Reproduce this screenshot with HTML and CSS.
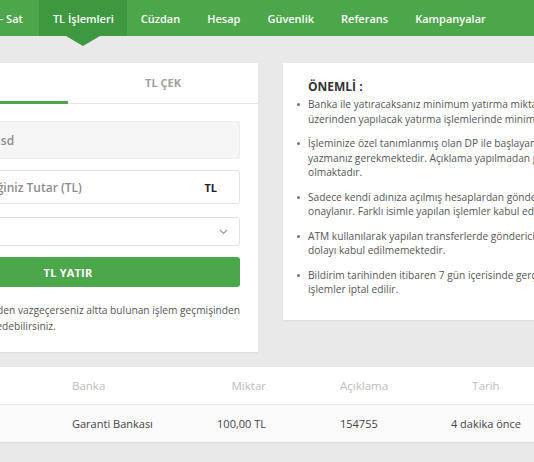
FILE: index.html
```html
<!DOCTYPE html>
<html lang="tr">
<head>
<meta charset="utf-8">
<title>TL İşlemleri</title>
<link rel="stylesheet" href="styles.css">
</head>
<body>
<nav class="nav">
  <a class="nav-item">Al - Sat</a>
  <a class="nav-item active">TL İşlemleri</a>
  <a class="nav-item">Cüzdan</a>
  <a class="nav-item">Hesap</a>
  <a class="nav-item">Güvenlik</a>
  <a class="nav-item">Referans</a>
  <a class="nav-item">Kampanyalar</a>
</nav>

<main class="main">
  <div class="row">
    <section class="card form-card">
      <div class="tabs">
        <div class="tab active">TL YATIR</div>
        <div class="tab">TL ÇEK</div>
      </div>
      <div class="form-body">
        <input class="field disabled" type="text" value="Ahmet Yılmaz asd" disabled>
        <div class="field suffix-field">
          <input class="inner" type="text" placeholder="Yatırmak İstediğiniz Tutar (TL)">
          <span class="suffix">TL</span>
        </div>
        <div class="field select-field">
          <span class="select-text">Banka Seçiniz</span>
          <svg class="chev" width="9" height="6" viewBox="0 0 9 6"><path d="M1 1 L4.5 4.5 L8 1" fill="none" stroke="#9a9a9a" stroke-width="1.1"/></svg>
        </div>
        <button class="btn">TL YATIR</button>
        <p class="note">Para yatırma işleminden vazgeçerseniz altta bulunan işlem geçmişinden<br>işlem talebinizi iptal edebilirsiniz.</p>
      </div>
    </section>

    <section class="card info-card">
      <h3 class="info-title">ÖNEMLİ :</h3>
      <ul class="info-list">
        <li>Banka ile yatıracaksanız minimum yatırma miktarı 10 TL'dir. ATM<br>üzerinden yapılacak yatırma işlemlerinde minimum tutar 50 TL'dir.</li>
        <li>İşleminize özel tanımlanmış olan DP ile başlayan kodu açıklama kısmına<br>yazmanız gerekmektedir. Açıklama yapılmadan gönderilen işlemler iade<br>olmaktadır.</li>
        <li>Sadece kendi adınıza açılmış hesaplardan gönderilen transferler<br>onaylanır. Farklı isimle yapılan işlemler kabul edilmemektedir.</li>
        <li>ATM kullanılarak yapılan transferlerde gönderici bilgisi görünmediğinden<br>dolayı kabul edilmemektedir.</li>
        <li>Bildirim tarihinden itibaren 7 gün içerisinde gerçekleşmeyen<br>işlemler iptal edilir.</li>
      </ul>
    </section>
  </div>

  <section class="card table-card">
    <div class="trow thead">
      <div class="c c1">İşlem</div>
      <div class="c c2">Banka</div>
      <div class="c c3">Miktar</div>
      <div class="c c4">Açıklama</div>
      <div class="c c5">Tarih</div>
      <div class="c c6">Durum</div>
    </div>
    <div class="trow tbody">
      <div class="c c1">Yatırma</div>
      <div class="c c2">Garanti Bankası</div>
      <div class="c c3">100,00 TL</div>
      <div class="c c4">154755</div>
      <div class="c c5">4 dakika önce</div>
      <div class="c c6">Bekliyor</div>
    </div>
  </section>
</main>
</body>
</html>
```

FILE: styles.css
```css
html, body {
  margin: 0;
  padding: 0;
  overflow: hidden;
}
body {
  background: #e9e9e9;
  font-family: "Open Sans", "Noto Sans", sans-serif;
  color: #555;
  width: 534px;
  height: 462px;
}

.nav {
  display: flex;
  height: 36px;
  background: #4ca64a;
  margin-left: -27px;
  width: 1000px;
}
.nav-item {
  position: relative;
  display: flex;
  align-items: center;
  padding: 0 13.5px;
  color: #fff;
  font-size: 11px;
  font-weight: 600;
  white-space: nowrap;
}
.nav-item.active {
  background: #3e983f;
  margin-left: 3px;
}
.nav-item.active::after {
  content: "";
  position: absolute;
  left: 50%;
  top: 36px;
  margin-left: -17px;
  border-left: 17px solid transparent;
  border-right: 17px solid transparent;
  border-top: 10px solid #3e983f;
}

.main {
  margin-left: -122px;
  padding-top: 27px;
}
.row {
  display: flex;
  align-items: flex-start;
  gap: 25px;
}
.card {
  background: #fff;
  box-shadow: 0 1px 2px rgba(0,0,0,0.06);
}

.form-card {
  width: 380px;
  flex: none;
}
.tabs {
  display: flex;
  height: 40px;
  border-bottom: 1px solid #e6e6e6;
}
.tab {
  flex: 1;
  display: flex;
  align-items: center;
  justify-content: center;
  font-size: 11px;
  font-weight: 700;
  color: #a0a0a0;
  border-bottom: 3px solid transparent;
  margin-bottom: -1px;
}
.tab.active {
  border-bottom-color: #4ca64a;
  color: #333;
}
.form-body {
  padding: 17px 18px 18px;
  display: flex;
  flex-direction: column;
}
.field {
  box-sizing: border-box;
  width: 100%;
  border: 1px solid #e2e2e2;
  border-radius: 3px;
  font-family: inherit;
  font-size: 12px;
  font-weight: 600;
  background: #fff;
}
input.field {
  display: block;
  height: 38px;
  padding: 0 12px;
  color: #8c8c8c;
  outline: none;
}
.field.disabled {
  background: #f5f5f5;
  border-color: #ececec;
  padding-left: 14px;
}
.suffix-field {
  display: flex;
  align-items: center;
  height: 34px;
  margin-top: 11px;
}
.inner {
  flex: 1;
  min-width: 0;
  border: 0;
  outline: none;
  background: transparent;
  font-family: inherit;
  font-size: 12px;
  font-weight: 600;
  padding: 0 12px;
  color: #555;
}
.inner::placeholder {
  color: #8c8c8c;
  opacity: 1;
}
.suffix {
  font-size: 11px;
  font-weight: 700;
  color: #222;
  padding-right: 22px;
}
.select-field {
  display: flex;
  align-items: center;
  justify-content: space-between;
  height: 29px;
  margin-top: 13px;
  padding: 0 11px 0 12px;
}
.select-text {
  color: #555;
  font-weight: 400;
  font-size: 12px;
}
.chev {
  display: block;
}
.btn {
  margin-top: 11px;
  height: 30px;
  border: 0;
  border-radius: 3px;
  background: #4ca64a;
  color: #fff;
  font-family: inherit;
  font-size: 11px;
  font-weight: 700;
  letter-spacing: 0.2px;
  padding-left: 6px;
}
.note {
  margin: 16px 0 0;
  padding-left: 4px;
  font-size: 10.2px;
  line-height: 15.5px;
  color: #555;
  white-space: nowrap;
}

.info-card {
  width: 420px;
  flex: none;
  padding: 15px 25px 23px;
  box-sizing: border-box;
}
.info-title {
  margin: 0 0 1px;
  font-size: 12px;
  font-weight: 700;
  color: #333;
  line-height: 18px;
}
.info-list {
  list-style: none;
  margin: 0;
  padding: 0;
  white-space: nowrap;
}
.info-list li {
  position: relative;
  font-size: 10.2px;
  line-height: 14.5px;
  color: #555;
  margin-bottom: 10px;
}
.info-list li:last-child {
  margin-bottom: 0;
}
.info-list li::before {
  content: "";
  position: absolute;
  left: -11px;
  top: 6px;
  width: 3px;
  height: 3px;
  border-radius: 50%;
  background: #777;
}

.table-card {
  margin-top: 15px;
  width: 785px;
}
.trow {
  display: grid;
  grid-template-columns: 194px 118px 100px 130px 128px 1fr;
  height: 37px;
  align-items: center;
  font-size: 11px;
}
.thead {
  color: #bdbdbd;
  font-size: 11.5px;
  border-bottom: 1px solid #eee;
}
.tbody {
  background: #fafafa;
  color: #444;
  font-weight: 500;
}
.c3 { text-align: right; padding-right: 24px; }
.c4 { padding-left: 50px; }
.c5 { text-align: center; padding-left: 4px; }
.c1 { padding-left: 30px; }
.c6 { text-align: center; }
```
